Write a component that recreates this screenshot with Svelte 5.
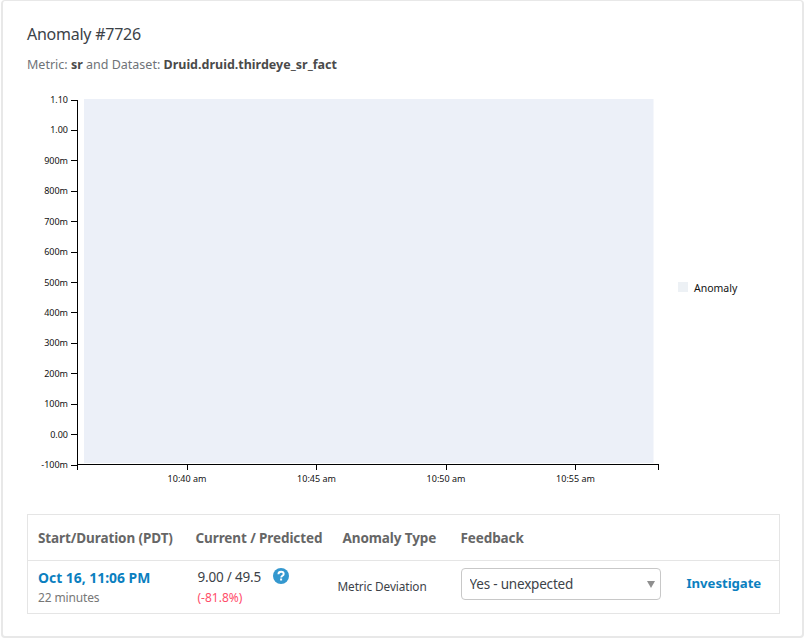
<script>
  const yLabels = ["1.10", "1.00", "900m", "800m", "700m", "600m", "500m", "400m", "300m", "200m", "100m", "0.00", "-100m"];
  const xLabels = [
    { x: 187, text: "10:40 am" },
    { x: 316.5, text: "10:45 am" },
    { x: 446, text: "10:50 am" },
    { x: 575.5, text: "10:55 am" }
  ];
  const yAt = (i) => 99.5 + i * 30.42;
</script>

<div class="card">
  <h1>Anomaly #7726</h1>
  <p class="meta">Metric: <b>sr</b> and Dataset: <b>Druid.druid.thirdeye_sr_fact</b></p>

  <svg class="chart" width="752" height="402" viewBox="27 84 752 402">
    <rect x="84" y="99" width="569.5" height="364" fill="#ecf0f8" />

    <line class="axis" x1="77.5" y1="99.5" x2="77.5" y2="470" />
    <line class="axis" x1="77" y1="464.5" x2="659" y2="464.5" />
    <line class="axis" x1="658.5" y1="464" x2="658.5" y2="470" />

    {#each yLabels as label, i}
      <line class="axis" x1="71" y1={Math.round(yAt(i)) + 0.5} x2="77" y2={Math.round(yAt(i)) + 0.5} />
      <text class="tick" x="68" y={yAt(i) + 3.5} text-anchor="end">{label}</text>
    {/each}

    {#each xLabels as t}
      <line class="axis" x1={t.x} y1="464" x2={t.x} y2="470" />
      <text class="tick" x={t.x} y="481.5" text-anchor="middle">{t.text}</text>
    {/each}

    <rect x="678" y="282" width="10" height="10" fill="#edf1f5" />
    <text class="legend" x="694" y="292">Anomaly</text>
  </svg>

  <table>
    <thead>
      <tr>
        <th class="c1">Start/Duration (PDT)</th>
        <th class="c2">Current / Predicted</th>
        <th class="c3">Anomaly Type</th>
        <th class="c4">Feedback</th>
        <th class="c5"></th>
      </tr>
    </thead>
    <tbody>
      <tr>
        <td>
          <a class="start" href="#top">Oct 16, 11:06 PM</a>
          <div class="sub">22 minutes</div>
        </td>
        <td class="values">
          <div class="nums">
            9.00 / 49.5
            <svg class="help" width="16" height="16" viewBox="0 0 16 16">
              <circle cx="8" cy="8" r="8" fill="#3498cf" />
              <path d="M5.4 6.2c.1-1.6 1.2-2.4 2.7-2.4 1.5 0 2.6.9 2.6 2.1 0 1.9-2.5 1.9-2.5 3.6" fill="none" stroke="#fff" stroke-width="1.9" />
              <rect x="7.1" y="10.5" width="2" height="2" fill="#fff" />
            </svg>
          </div>
          <div class="delta">(-81.8%)</div>
        </td>
        <td class="type">Metric Deviation</td>
        <td class="feedback">
          <div class="select-wrap">
            <select>
              <option>Yes - unexpected</option>
            </select>
          </div>
        </td>
        <td class="action"><a href="#top">Investigate</a></td>
      </tr>
    </tbody>
  </table>
</div>

<style>
  :global(body) {
    margin: 0;
    background: #fff;
  }

  .card {
    box-sizing: border-box;
    width: 803px;
    height: 638px;
    margin-left: 1px;
    padding: 23px 24px 0;
    border: 2px solid #e8e8e8;
    border-top-width: 1px;
    border-radius: 4px;
    font-family: "Noto Sans", sans-serif;
    color: #3c4248;
    overflow: hidden;
  }

  h1 {
    margin: 0;
    height: 20px;
    font-size: 16px;
    line-height: 20px;
    font-weight: 400;
    letter-spacing: -0.25px;
  }

  .meta {
    margin: 12px 0 0;
    height: 17px;
    font-size: 12.5px;
    line-height: 17px;
    color: #6f7377;
  }

  .meta b {
    color: #4a4a4a;
    font-weight: 700;
  }

  .chart {
    display: block;
    margin-top: 11px;
  }

  .axis {
    stroke: #000;
    stroke-width: 1;
    shape-rendering: crispEdges;
  }

  .tick {
    font-size: 9px;
    fill: #111;
  }

  .legend {
    font-size: 10.5px;
    fill: #111;
  }

  table {
    width: 753px;
    margin-top: 28px;
    border-collapse: collapse;
    table-layout: fixed;
    border: 1px solid #e5e5e5;
  }

  th {
    height: 46px;
    padding: 0 0 0 10px;
    box-sizing: border-box;
    border-bottom: 1px solid #e5e5e5;
    text-align: left;
    font-size: 13.5px;
    font-weight: 700;
    color: #666;
    letter-spacing: -0.1px;
  }

  .c1 { width: 158px; }
  .c2 { width: 147px; }
  .c3 { width: 118px; }
  .c4 { width: 220px; }

  td {
    height: 53px;
    padding: 8px 0 0 10px;
    box-sizing: border-box;
    vertical-align: top;
    font-size: 13px;
  }

  a {
    text-decoration: none;
    color: #0b7fbf;
    font-weight: 700;
  }

  .start {
    display: block;
    font-size: 13.9px;
    line-height: 18px;
  }

  .sub {
    margin-top: 3px;
    font-size: 12px;
    line-height: 16px;
    letter-spacing: -0.15px;
    color: #777;
  }

  .values {
    padding-top: 7px;
    padding-left: 12px;
  }

  .nums {
    display: flex;
    align-items: center;
    font-size: 13.5px;
    line-height: 18px;
    letter-spacing: -0.2px;
  }

  .help {
    margin-left: 12px;
    margin-top: -3px;
  }

  .delta {
    margin-top: 4px;
    font-size: 12px;
    line-height: 16px;
    color: #ff4d6a;
  }

  .type {
    padding: 0 0 2px 5px;
    vertical-align: middle;
    font-size: 11.8px;
    letter-spacing: -0.1px;
  }

  .feedback {
    padding-top: 7px;
  }

  .select-wrap {
    position: relative;
    width: 200px;
  }

  .select-wrap::after {
    content: "";
    position: absolute;
    right: 6px;
    top: 13px;
    border-left: 4px solid transparent;
    border-right: 4px solid transparent;
    border-top: 7px solid #8f8f8f;
    pointer-events: none;
  }

  select {
    display: block;
    width: 200px;
    height: 32px;
    padding: 0 8px;
    border: 1px solid #c8c8c8;
    border-radius: 4px;
    background: #fff;
    appearance: none;
    font-family: inherit;
    font-size: 13.5px;
    letter-spacing: -0.2px;
    color: #3c4248;
  }

  .action {
    padding-top: 13px;
    padding-left: 16px;
    font-size: 13.2px;
    line-height: 18px;
    letter-spacing: -0.05px;
  }
</style>
